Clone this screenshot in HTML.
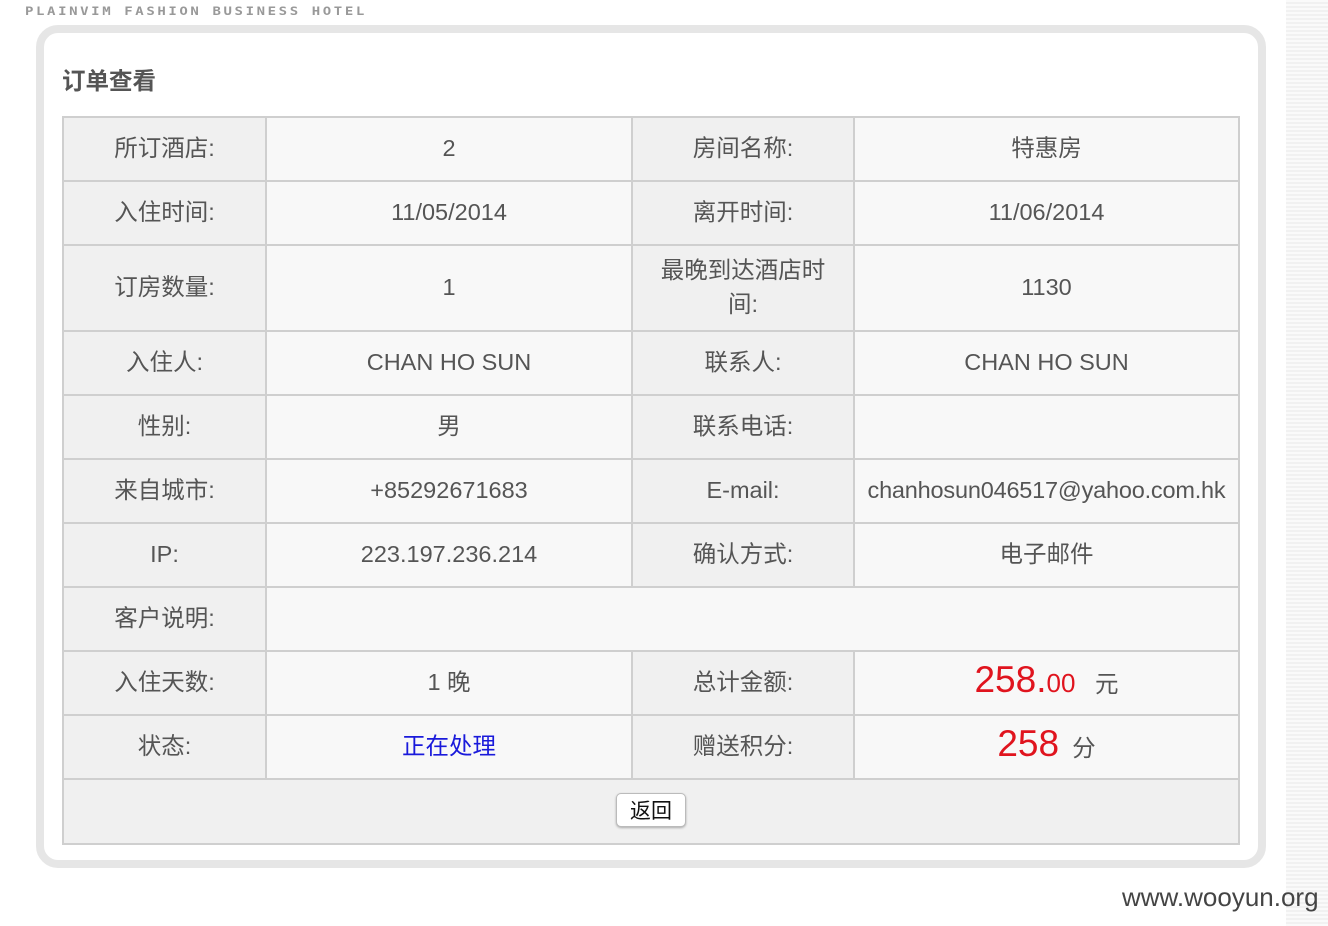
<!DOCTYPE html>
<html><head><meta charset="utf-8"><style>
html,body{margin:0;padding:0;background:#fff;width:1328px;height:926px;overflow:hidden;position:relative;font-family:"Liberation Sans","Noto Sans CJK SC",sans-serif;color:#555}
.logo{position:absolute;left:25px;top:5px;font-size:14px;letter-spacing:2.6px;color:#999;font-weight:bold;font-family:"DejaVu Sans Mono","Liberation Mono",monospace;transform:scaleY(0.85);transform-origin:top left}
.strip{position:absolute;left:1286px;top:0;width:42px;height:926px;background:repeating-linear-gradient(#fafafa 0 2px,#f1f1f1 2px 4px)}
.frame{position:absolute;left:36px;top:25px;width:1214px;height:827px;border:8px solid #e6e6e6;border-radius:22px;background:#fff}
h1{position:absolute;left:62px;top:62px;margin:0;font-size:23.5px;font-weight:bold;color:#555}
table{position:absolute;left:62px;top:116px;border-collapse:collapse;table-layout:fixed;width:1176px}
td{border:2px solid #cfcfcf;text-align:center;font-size:23.5px;padding:0 0 3px;height:59px;background:#f8f8f8;line-height:34px}
td.l{background:#f0f0f0}
.red{color:#e0141e}
.blue{color:#1a1adb}
button{font-family:"Liberation Sans","Noto Sans CJK SC",sans-serif;font-size:21px;background:#fff;border:1px solid #bbb;border-radius:5px;padding:1px 13px;color:#111;box-shadow:0 1px 2px #aaa}
.wm{position:absolute;left:1122px;top:882px;font-size:26px;color:#444}
</style></head><body>
<div class="logo">PLAINVIM FASHION BUSINESS HOTEL</div>
<div class="strip"></div>
<div class="frame"></div>
<h1>订单查看</h1>
<table>
<colgroup><col style="width:203px"><col style="width:366px"><col style="width:222px"><col style="width:385px"></colgroup>
<tr><td class="l">所订酒店:</td><td>2</td><td class="l">房间名称:</td><td>特惠房</td></tr>
<tr><td class="l">入住时间:</td><td>11/05/2014</td><td class="l">离开时间:</td><td>11/06/2014</td></tr>
<tr><td class="l" style="height:81px">订房数量:</td><td>1</td><td class="l">最晚到达酒店时<br>间:</td><td>1130</td></tr>
<tr><td class="l">入住人:</td><td>CHAN HO SUN</td><td class="l">联系人:</td><td>CHAN HO SUN</td></tr>
<tr><td class="l">性别:</td><td>男</td><td class="l">联系电话:</td><td></td></tr>
<tr><td class="l">来自城市:</td><td>+85292671683</td><td class="l">E-mail:</td><td style="font-size:23.5px;letter-spacing:-0.2px">chanhosun046517@yahoo.com.hk</td></tr>
<tr><td class="l">IP:</td><td>223.197.236.214</td><td class="l">确认方式:</td><td>电子邮件</td></tr>
<tr><td class="l">客户说明:</td><td colspan="3"></td></tr>
<tr><td class="l">入住天数:</td><td>1 晚</td><td class="l">总计金额:</td><td><span class="red" style="font-size:37px">258.</span><span class="red" style="font-size:26px">00</span>&nbsp;&nbsp; 元</td></tr>
<tr><td class="l">状态:</td><td class="blue">正在处理</td><td class="l">赠送积分:</td><td><span class="red" style="font-size:37px">258</span>&nbsp; 分</td></tr>
<tr><td class="l" colspan="4" style="height:60px"><button>返回</button></td></tr>
</table>
<div class="wm">www.wooyun.org</div>
</body></html>
